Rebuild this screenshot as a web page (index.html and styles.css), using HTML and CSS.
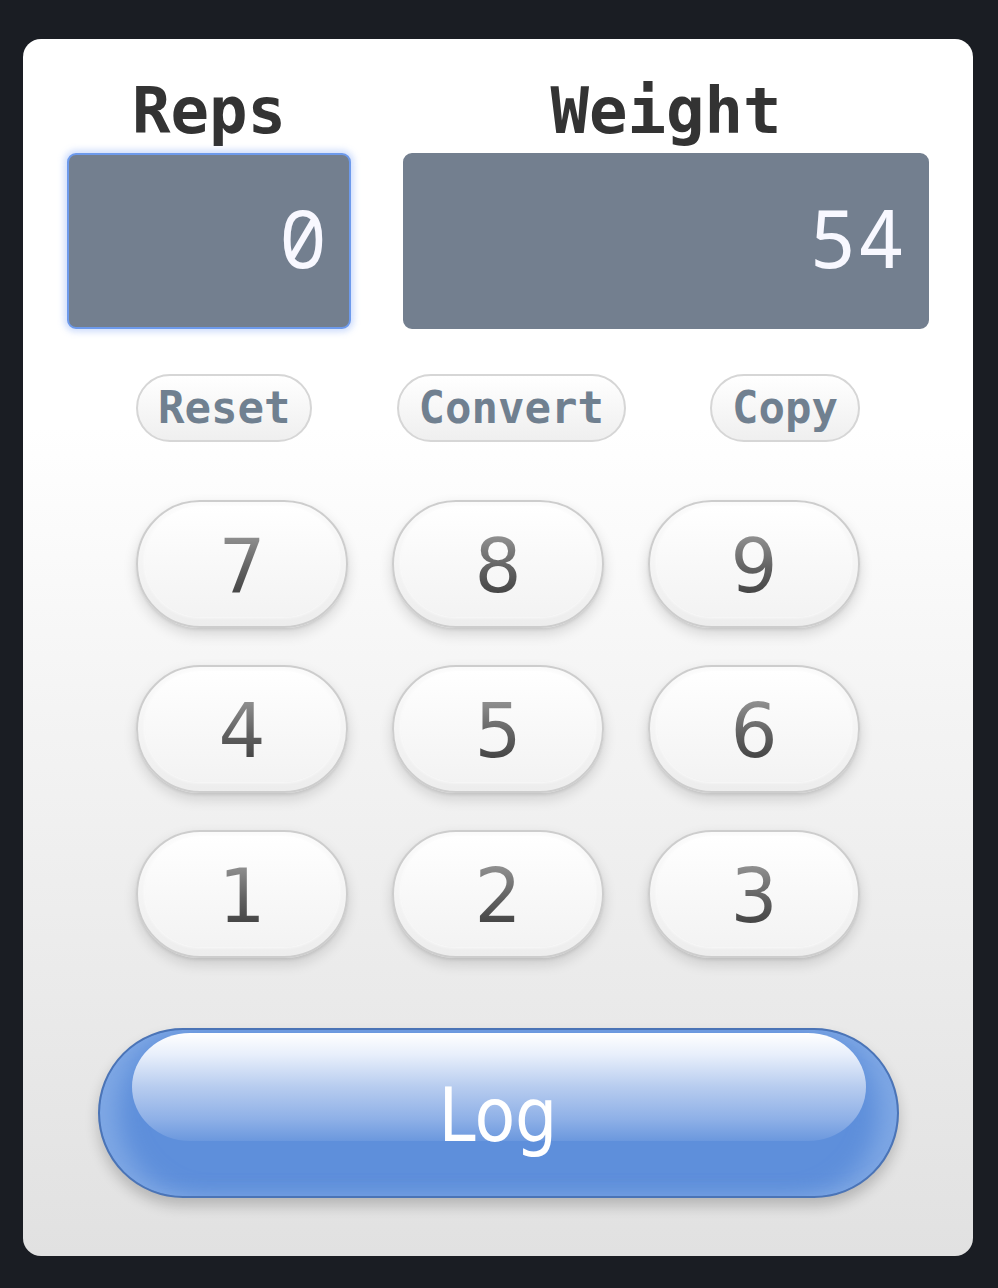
FILE: index.html
```html
<!DOCTYPE html>
<html lang="en">
<head>
<meta charset="utf-8">
<title>Log set</title>
<link rel="stylesheet" href="styles.css">
</head>
<body>
<main class="card">
  <section class="fields">
    <div class="field field-reps">
      <label class="field-label" for="reps">Reps</label>
      <input class="field-input is-focused" id="reps" type="text" value="0">
    </div>
    <div class="field field-weight">
      <label class="field-label" for="weight">Weight</label>
      <input class="field-input" id="weight" type="text" value="54">
    </div>
  </section>
  <nav class="actions">
    <button class="action">Reset</button>
    <button class="action">Convert</button>
    <button class="action">Copy</button>
  </nav>
  <section class="keypad">
    <button class="key"><span>7</span></button>
    <button class="key"><span>8</span></button>
    <button class="key"><span>9</span></button>
    <button class="key"><span>4</span></button>
    <button class="key"><span>5</span></button>
    <button class="key"><span>6</span></button>
    <button class="key"><span>1</span></button>
    <button class="key"><span>2</span></button>
    <button class="key"><span>3</span></button>
  </section>
  <div class="log-row">
    <button class="log"><span class="log-text">Log</span></button>
  </div>
</main>
</body>
</html>
```
FILE: styles.css
```css
html, body {
  margin: 0;
  padding: 0;
  background: #1a1d23;
}
body {
  padding: 39px 25px 32px 23px;
  font-family: "DejaVu Sans", sans-serif;
}
.card {
  box-sizing: border-box;
  width: 950px;
  height: 1217px;
  border-radius: 18px;
  background: linear-gradient(to bottom, #ffffff 0%, #ffffff 32%, #f4f4f4 55%, #e1e1e1 100%);
  padding: 35px 44px 58px 44px;
  display: flex;
  flex-direction: column;
}
.fields {
  display: grid;
  grid-template-columns: 284px 1fr;
  column-gap: 52px;
}
.field {
  display: flex;
  flex-direction: column;
}
.field-label {
  font-family: "DejaVu Sans Mono", monospace;
  font-weight: bold;
  font-size: 64px;
  line-height: 74px;
  height: 74px;
  color: #333333;
  text-align: center;
  margin-bottom: 5px;
}
.field-input {
  box-sizing: border-box;
  width: 100%;
  height: 176px;
  margin: 0;
  border: 2px solid #737f8f;
  border-radius: 9px;
  background: #737f8f;
  color: #f8f8ff;
  font-family: "Noto Sans Mono", "DejaVu Sans Mono", monospace;
  font-size: 80px;
  text-align: right;
  padding: 0 22px 10px 10px;
  outline: none;
}
.field-input.is-focused {
  border-color: #6d9aec;
  box-shadow: 0 0 6px 3px rgba(120, 160, 245, 0.35);
}
.actions {
  width: 724px;
  margin: 45px auto 0;
  display: flex;
  justify-content: space-between;
}
.action {
  box-sizing: border-box;
  height: 68px;
  padding: 0 20px;
  border: 2px solid #d6d6d6;
  border-radius: 34px;
  background: linear-gradient(to bottom, #ffffff, #efefef);
  font-family: "DejaVu Sans Mono", monospace;
  font-weight: bold;
  font-size: 44px;
  line-height: 64px;
  color: #708090;
}
.keypad {
  width: 724px;
  margin: 58px auto 0;
  display: grid;
  grid-template-columns: repeat(3, 212px);
  grid-auto-rows: 128px;
  column-gap: 44px;
  row-gap: 37px;
}
.key {
  position: relative;
  box-sizing: border-box;
  margin: 0;
  padding: 0;
  border: 2px solid #cdcdcd;
  border-radius: 64px;
  background: linear-gradient(to bottom, #fbfbfb 0%, #f3f3f3 60%, #ededed 100%);
  box-shadow: 0 6px 14px rgba(0, 0, 0, 0.14), 0 2px 3px rgba(0, 0, 0, 0.08);
  font-family: "DejaVu Sans", sans-serif;
  font-size: 74px;
  line-height: 1;
}
.key::before {
  content: "";
  position: absolute;
  inset: 4px 7px 9px 7px;
  border-radius: 60px;
  background: linear-gradient(to bottom, #ffffff 0%, #f8f8f8 55%, #f3f3f3 100%);
  box-shadow: 0 0 3px 1px rgba(255, 255, 255, 0.7);
}
.key span {
  position: relative;
  display: inline-block;
  background: linear-gradient(to bottom, #a0a0a0 0%, #626262 55%, #3a3a3a 100%);
  -webkit-background-clip: text;
  background-clip: text;
  color: transparent;
  padding-top: 4px;
}
.log-row {
  margin-top: 70px;
  display: flex;
  justify-content: center;
}
.log {
  position: relative;
  box-sizing: border-box;
  width: 801px;
  height: 170px;
  margin: 0;
  padding: 0;
  border: 2px solid #4b74b6;
  border-radius: 85px;
  background: #5e8fdb;
  box-shadow: 0 8px 14px rgba(0, 0, 0, 0.2), inset 24px 0 24px -6px rgba(150, 185, 235, 0.6), inset -24px 0 24px -6px rgba(150, 185, 235, 0.6);
  overflow: hidden;
}
.log::before {
  content: "";
  position: absolute;
  left: 32px;
  right: 31px;
  top: 3px;
  height: 108px;
  border-radius: 58px / 54px;
  background: linear-gradient(to bottom, #ffffff 0%, #e8effb 20%, #b7ccef 50%, #8eb0e7 80%, #6b98de 100%);
}
.log-text {
  position: relative;
  font-family: "DejaVu Sans Condensed", "DejaVu Sans", sans-serif;
  font-stretch: condensed;
  font-size: 74px;
  line-height: 1;
  color: #ffffff;
  top: 2px;
}
```
